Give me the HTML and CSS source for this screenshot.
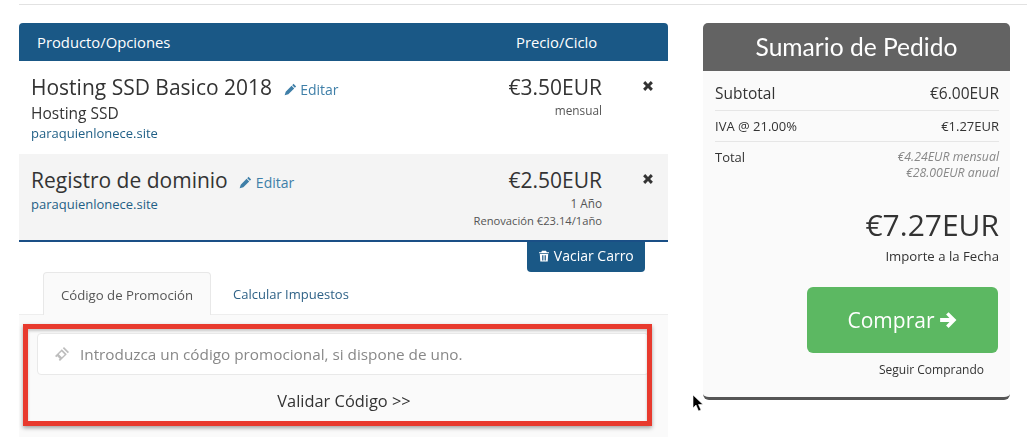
FILE: index.html
```html
<html>
  <head>
    <title>Carro de Compra</title>
    <link rel="stylesheet" href="styles.css">
  </head>
  <body>
    <div class="top-rule"></div>
    <div class="page">
      <div class="cart">
        <div class="cart-head">
          <span class="col-name">Producto/Opciones</span>
          <span class="col-price">Precio/Ciclo</span>
        </div>

        <div class="item">
          <div class="col-name">
            <div class="item-title">Hosting SSD Basico 2018 <a class="edit"><svg class="pencil" viewBox="0 0 12 12"><path d="M8.800.8 11.200 3.200 10 4.400 7.600 2ZM7 2.600 9.400 5 4 10.400.6 11.400 1.600 8Z"/></svg> Editar</a></div>
            <div class="item-group">Hosting SSD</div>
            <div class="item-domain">paraquienlonece.site</div>
          </div>
          <div class="col-price">
            <div class="price">€3.50EUR</div>
            <div class="cycle">mensual</div>
          </div>
          <div class="remove"><svg class="cross" viewBox="0 0 10 10"><path d="M1.500 3 3 1.500 5 3.500 7 1.500 8.500 3 6.500 5 8.500 7 7 8.500 5 6.500 3 8.500 1.500 7 3.500 5Z"/></svg></div>
        </div>

        <div class="item item-alt">
          <div class="col-name">
            <div class="item-title">Registro de dominio <a class="edit"><svg class="pencil" viewBox="0 0 12 12"><path d="M8.800.8 11.200 3.200 10 4.400 7.600 2ZM7 2.600 9.400 5 4 10.400.6 11.400 1.600 8Z"/></svg> Editar</a></div>
            <div class="item-domain">paraquienlonece.site</div>
          </div>
          <div class="col-price">
            <div class="price">€2.50EUR</div>
            <div class="cycle">1 Año</div>
            <div class="cycle renewal">Renovación €23.14/1año</div>
          </div>
          <div class="remove"><svg class="cross" viewBox="0 0 10 10"><path d="M1.500 3 3 1.500 5 3.500 7 1.500 8.500 3 6.500 5 8.500 7 7 8.500 5 6.500 3 8.500 1.500 7 3.500 5Z"/></svg></div>
        </div>

        <div class="empty-row">
          <a class="btn-empty"><svg class="trash" viewBox="0 0 12 12"><path d="M4 .8h4l.8 1.400H11v1.100H1V2.200h2.200ZM1.800 4h8.400l-.5 7.600H2.300ZM4 5.200v5.200h.8V5.200ZM5.600 5.200v5.200h.8V5.200ZM7.200 5.200v5.200H8V5.200Z" fill-rule="evenodd"/></svg> Vaciar Carro</a>
        </div>

        <div class="tabs">
          <a class="tab tab-active">Código de Promoción</a>
          <a class="tab">Calcular Impuestos</a>
        </div>
        <div class="tab-pane">
          <div class="promo-input">
            <svg class="ticket" viewBox="0 0 16 16"><path d="M10 1 15 6 13.800 7.200 8.800 2.200ZM7.800 3.200 12.800 8.200 6 15 4.700 13.700 5.700 12.700 3.300 10.300 2.300 11.300 1 10ZM7.600 5.400 4.800 8.200 7.800 11.200 10.600 8.400Z" fill-rule="evenodd"/></svg>
            Introduzca un código promocional, si dispone de uno.
          </div>
          <div class="validate">Validar Código &gt;&gt;</div>
          <div class="highlight"></div>
        </div>
      </div>

      <div class="summary">
        <div class="summary-head">Sumario de Pedido</div>
        <div class="summary-body">
          <div class="sum-row sum-sub"><span>Subtotal</span><span>€6.00EUR</span></div>
          <div class="sum-row sum-tax"><span>IVA @ 21.00%</span><span>€1.27EUR</span></div>
          <div class="sum-row sum-total">
            <span>Total</span>
            <span class="recurring">€4.24EUR mensual<br>€28.00EUR anual</span>
          </div>
          <div class="due">€7.27EUR</div>
          <div class="due-label">Importe a la Fecha</div>
          <div class="checkout-wrap">
            <a class="btn-checkout">Comprar <svg class="arrow" viewBox="0 0 16 16"><path d="M8.500 1 15.500 8 8.500 15 6.300 12.800 9.300 9.800H1V6.200H9.300L6.300 3.200Z"/></svg></a>
            <div class="continue">Seguir Comprando</div>
          </div>
        </div>
      </div>
    </div>
    <svg class="cursor" viewBox="0 0 12 18"><path d="M1 1V14L4 11 6.500 17 9 16 6.500 10.500H11Z" fill="#000" stroke="#fff" stroke-width=".6"/></svg>
  </body>
</html>
```

FILE: styles.css
```css
body { margin: 0; width: 1027px; height: 441px; overflow: hidden; position: relative;
       font-family: "Open Sans", "DejaVu Sans", sans-serif; font-size: 14px;
       background-color: #FFFFFF; color: #333333; filter: blur(0.35px); }

.top-rule { margin-left: 19px; margin-top: 4px; height: 1px; background-color: #e2e2e2; }

.page { display: flex; gap: 35px; padding: 18px 0 0 19px; }

/* left column */
.cart { width: 649px; }

.cart-head { display: flex; align-items: center; height: 38px;
             background-color: #1a5886; color: #FFFFFF; font-weight: 500; font-size: 14.800px;
             border-radius: 4px 4px 0 0; }
.cart-head .col-name { padding-left: 18px; flex: 1; }
.cart-head .col-price { width: 152px; }

.item { display: flex; height: 93px; box-sizing: border-box; padding: 12px 0 0 12px; position: relative; }
.item .col-name { flex: 1; }
.item-alt { height: 86px; background-color: #f4f4f4; }

.item-title { font-size: 21px; line-height: 28px; color: #333333; }
.edit { font-size: 14px; color: #3f7fa8; margin-left: 6px; }
.pencil { width: 13px; height: 13px; fill: #3f7fa8; vertical-align: -1px; }
.item-group { font-size: 15.500px; line-height: 22px; margin-top: -2px; }
.item-domain { font-size: 13px; line-height: 18px; color: #1f5f86; margin-top: 0; }
.item-alt .item-domain { margin-top: -2px; }

.item .col-price { width: 200px; margin-right: 66px; text-align: right; }
.price { font-size: 21px; line-height: 28px; }
.cycle { font-size: 11.800px; line-height: 17px; color: #555555; }
.renewal { font-size: 11.200px; }
.item .cycle:nth-child(2) { margin-top: 1px; }
.remove { position: absolute; right: 13px; top: 18px; line-height: 0; }
.cross { width: 14px; height: 14px; fill: #333333; }

.empty-row { display: flex; justify-content: flex-end; padding-right: 23px;
             border-top: 2px solid #1a4f86; }
.btn-empty { display: block; width: 118px; height: 30px; line-height: 28px; text-align: center;
             background-color: #1a5886; color: #FFFFFF; font-weight: 500; font-size: 14px;
             border-radius: 0 0 4px 4px; }
.trash { width: 12px; height: 12px; fill: #FFFFFF; vertical-align: -1px; }

.tabs { display: flex; height: 42px; padding-left: 24px; border-bottom: 1px solid #eeeeee; }
.tab { display: block; box-sizing: border-box; height: 43px; padding: 13px 21px 0 22px; font-size: 13px;
       font-weight: 500; line-height: 18px; color: #2f6287; }
.tab-active { width: 168px; padding: 13px 0 0 0; text-align: center; color: #555555; font-weight: 400; font-size: 13.200px;
              background-color: #fafafa; border: 1px solid #e8e8e8; border-bottom: 0; border-radius: 4px 4px 0 0; }

.tab-pane { position: relative; height: 122px; box-sizing: border-box; padding: 18px 0 0 18px;
            background-color: #fafafa; }
.promo-input { display: flex; align-items: center; gap: 10px; box-sizing: border-box;
               height: 42px; width: 612px; padding-left: 16px;
               background-color: #FFFFFF; border: 1px solid #e9e9e9; border-radius: 4px;
               font-size: 15.300px; color: #888888; }
.ticket { width: 16px; height: 16px; fill: #bdbdbd; }
.validate { margin-top: 14px; width: 650px; margin-left: -18px; text-align: center; font-size: 16.400px; color: #333333; }
.highlight { position: absolute; left: 4px; top: 9px; width: 629px; height: 102px; box-sizing: border-box;
             border: 5px solid #e83a2e; box-shadow: 0 2px 4px rgba(0,0,0,0.35), inset 0 2px 3px rgba(0,0,0,0.2); }

/* right column */
.summary { width: 307px; height: 377px; background-color: #fafafa; border-bottom: 3px solid #555555;
           border-radius: 6px; box-sizing: border-box; }
.summary-head { height: 48px; line-height: 47px; text-align: center; font-family: "Lato", sans-serif;
                background-color: #636363; color: #FFFFFF; font-size: 24.600px; font-weight: 400;
                border-radius: 5px 5px 0 0; }
.summary-body { padding: 0 11px 0 12px; }

.sum-row { display: flex; justify-content: space-between; }
.sum-sub { font-size: 15.500px; height: 39px; line-height: 45px; border-bottom: 1px solid #e6e6e6; }
.sum-tax { font-size: 13px; height: 30px; line-height: 31px; border-bottom: 1px solid #e6e6e6; }
.sum-total { font-size: 13px; padding-top: 7px; line-height: 16px; }
.recurring { text-align: right; font-style: italic; font-size: 12.300px; color: #888888; }

.due { margin-top: 25px; text-align: right; font-size: 30px; line-height: 38px; }
.due-label { margin-top: 3px; text-align: right; font-size: 13.200px; line-height: 18px; }

.checkout-wrap { width: 191px; margin-left: auto; margin-right: 1px; margin-top: 22px; }
.btn-checkout { display: flex; align-items: center; justify-content: center; gap: 5px; height: 66px;
                background-color: #5cb862; color: #FFFFFF; font-size: 21px; border-radius: 6px; }
.arrow { width: 18px; height: 18px; fill: #FFFFFF; }
.continue { margin-top: 9px; text-align: right; font-size: 12px; line-height: 16px; padding-right: 14px; }

.cursor { position: absolute; left: 692px; top: 394px; width: 12px; height: 18px; }
```
